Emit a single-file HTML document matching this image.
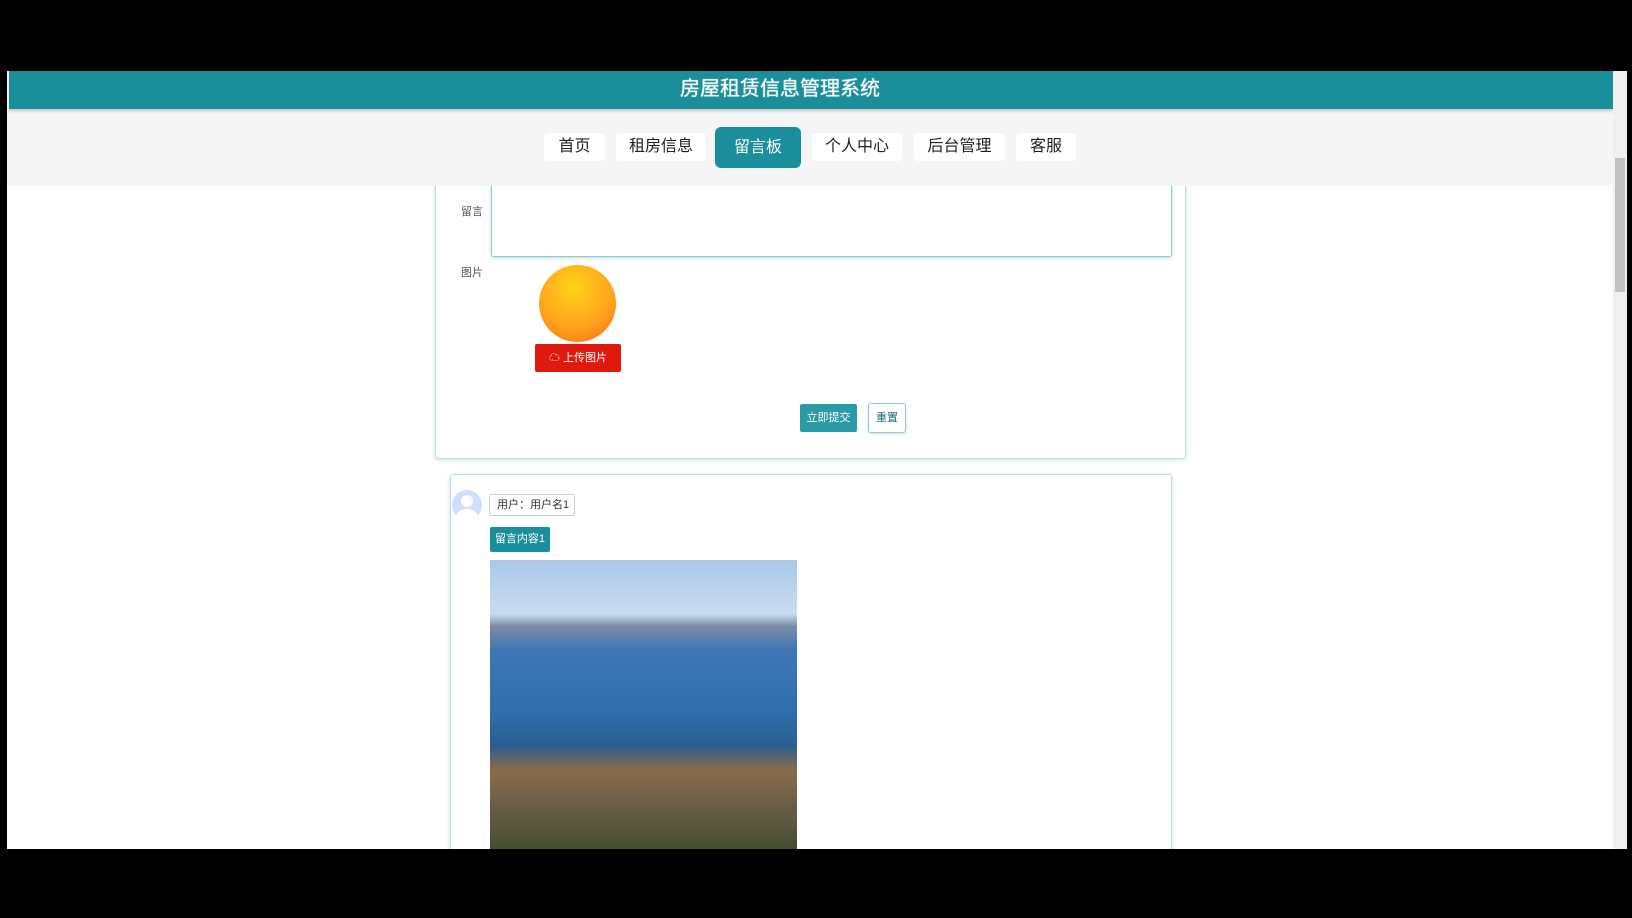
<!DOCTYPE html>
<html><head><meta charset="utf-8"><style>
*{margin:0;padding:0;box-sizing:border-box}
body{width:1632px;height:918px;background:#000;position:relative;overflow:hidden;font-family:"Liberation Sans","Noto Sans CJK SC",sans-serif}
.page{position:absolute;left:7px;top:71px;width:1606px;height:778px;background:#fff;overflow:hidden}
.hdr{position:absolute;left:2px;top:0;width:1604px;height:38px;background:#1a8f9b;color:#fff;font-size:20px;text-align:center;line-height:36px;box-shadow:0 2px 3px rgba(0,0,0,.2);padding-right:62px;z-index:6;text-shadow:0 0 1px #fff}
.nav{position:absolute;left:0;top:38px;width:1606px;height:77px;background:#f5f5f5;z-index:5}
.nb{position:absolute;top:24px;height:28px;background:#fff;border-radius:4px;font-size:16px;color:#222;text-align:center;line-height:28px}
.nb.a{top:18px;height:41px;background:#1a8f9b;color:#fff;line-height:41px;border-radius:6px}
.card{position:absolute;left:428px;top:60px;width:751px;height:328px;border:1px solid #bcdfe3;border-radius:3px;box-shadow:0 1px 4px rgba(26,143,155,.25);background:#fff}
.lbl{position:absolute;font-size:11px;color:#555}
.ta{position:absolute;left:484px;top:90px;width:681px;height:96px;border:1px solid #8ccbd1;border-radius:3px;box-shadow:0 1px 3px rgba(26,143,155,.3)}
.sun{position:absolute;left:532px;top:194px;width:77px;height:77px;border-radius:50%;background:radial-gradient(circle at 45% 30%,#ffd21a,#ffa51c 55%,#fa6a14)}
.up{position:absolute;left:528px;top:273px;width:86px;height:28px;background:#e0190e;color:#fff;font-size:11px;line-height:28px;text-align:center;border-radius:2px}
.b1{position:absolute;left:793px;top:333px;width:57px;height:28px;background:#2a9aa5;color:#fff;font-size:11px;text-align:center;line-height:28px;border-radius:2px}
.b2{position:absolute;left:861px;top:332px;width:38px;height:30px;border:1px solid #8ccbd1;background:#fff;color:#1a6f77;font-size:11px;text-align:center;line-height:28px;border-radius:3px;box-shadow:0 1px 3px rgba(0,0,0,.15)}
.card2{position:absolute;left:443px;top:403px;width:722px;height:420px;border:1px solid #bcdfe3;border-radius:3px;box-shadow:0 1px 4px rgba(26,143,155,.25)}
.av{position:absolute;left:445px;top:419px;width:30px;height:30px;border-radius:50%;background:#cfe0ff;overflow:hidden}
.ub{position:absolute;left:482px;top:423px;width:86px;height:22px;border:1px solid #ccc;border-radius:3px;font-size:11px;line-height:20px;padding-left:7px;color:#333;background:#fff}
.tag{position:absolute;left:483px;top:456px;width:60px;height:25px;background:#1a8f9b;color:#fff;font-size:11px;line-height:25px;text-align:center;border-radius:2px}
.img{position:absolute;left:483px;top:489px;width:307px;height:300px;background:linear-gradient(180deg,#aac8ea 0%,#c9dcef 18%,#7b8ea8 22%,#3f76b5 30%,#2f6fb0 50%,#2a5e8e 62%,#8a6c4a 70%,#6a5d48 82%,#3b4a2a 100%)}
.sb{position:absolute;left:1613px;top:71px;width:14px;height:778px;background:#f0f0f0}
.th{position:absolute;left:1615px;top:158px;width:10px;height:134px;background:#c1c1c1}
</style></head><body>
<div class="page">
<div class="hdr">房屋租赁信息管理系统</div>
<div class="nav">
<div class="nb" style="left:537px;width:61px">首页</div>
<div class="nb" style="left:609px;width:90px">租房信息</div>
<div class="nb a" style="left:708px;width:86px">留言板</div>
<div class="nb" style="left:805px;width:90px">个人中心</div>
<div class="nb" style="left:907px;width:91px">后台管理</div>
<div class="nb" style="left:1009px;width:60px">客服</div>
</div>
<div class="card"></div>
<div class="ta"></div>
<div class="lbl" style="left:454px;top:132px">留言</div>
<div class="lbl" style="left:454px;top:193px">图片</div>
<div class="sun"></div>
<div class="up">☁ 上传图片</div>
<div class="b1">立即提交</div>
<div class="b2">重置</div>
<div class="card2"></div>
<div class="av"><div style="position:absolute;left:9px;top:5px;width:12px;height:12px;border-radius:50%;background:#fff"></div><div style="position:absolute;left:4px;top:19px;width:22px;height:16px;border-radius:50% 50% 0 0;background:#fff"></div></div>
<div class="ub">用户：用户名1</div>
<div class="tag">留言内容1</div>
<div class="img"></div>
</div>
<div class="sb"></div><div class="th"></div>
</body></html>
